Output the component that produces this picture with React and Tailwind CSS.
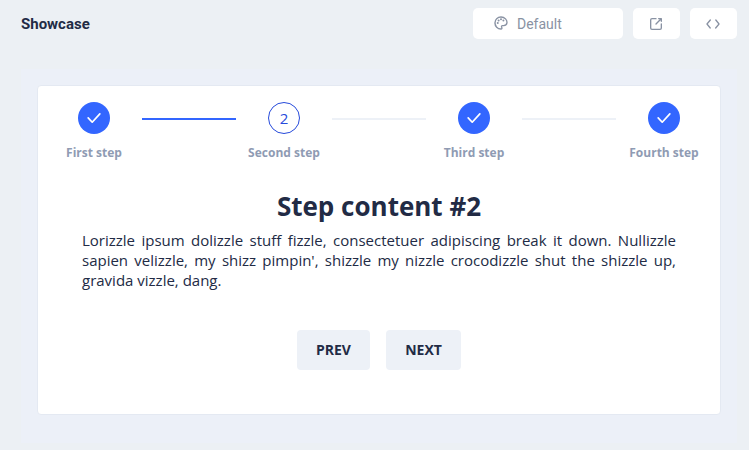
const Check = () => (
  <svg width="20" height="20" viewBox="0 0 24 24" fill="currentColor">
    <path d="M9.86 18a1 1 0 0 1-.73-.32l-4.86-5.17a1 1 0 1 1 1.46-1.37l4.12 4.39 8.41-9.2a1 1 0 1 1 1.48 1.34l-9.14 10a1 1 0 0 1-.73.33z" />
  </svg>
);

const steps = [
  { label: "First step", done: true },
  { label: "Second step", done: false },
  { label: "Third step", done: true },
  { label: "Fourth step", done: true },
];

export default function App() {
  return (
    <div className="h-[450px] w-[749px] overflow-hidden bg-[#ecf0f4] font-['Open_Sans',sans-serif] text-[#222b45]">
      <header className="flex h-[47px] items-center pl-[21px] pr-3 font-[Roboto,sans-serif]">
        <h1 className="mr-auto pt-0.5 text-[15px] font-bold">Showcase</h1>
        <div className="flex gap-[10px] text-[#8992a3]">
          <div className="flex h-[31px] w-[150px] items-center rounded-[5px] bg-white pl-5 text-sm">
            <svg className="-mt-0.5 mr-2" width="16" height="16" viewBox="0 0 24 24" fill="currentColor">
              <path d="M19.54 5.08A10.61 10.61 0 0 0 11.91 2a10 10 0 0 0-.05 20 2.58 2.58 0 0 0 2.53-1.89 2.52 2.52 0 0 0-.57-2.28.5.5 0 0 1 .37-.83h1.65A6.15 6.15 0 0 0 22 11.33a8.48 8.48 0 0 0-2.46-6.25zM15.88 15h-1.65a2.49 2.49 0 0 0-1.87 4.15.49.49 0 0 1 .12.49c-.05.21-.28.34-.59.36a8 8 0 0 1-7.82-9.11A8.1 8.1 0 0 1 11.92 4H12a8.47 8.47 0 0 1 6.1 2.48 6.5 6.5 0 0 1 1.9 4.77A4.17 4.17 0 0 1 15.88 15z" />
              <circle cx="12" cy="6.5" r="1.5" /><circle cx="15.6" cy="8.1" r="1.5" /><circle cx="8.4" cy="8.1" r="1.5" /><circle cx="7.1" cy="12" r="1.5" />
            </svg>
            Default
          </div>
          <div className="flex h-[31px] w-[47px] items-center justify-center rounded-[5px] bg-white pr-px">
            <svg width="16" height="16" viewBox="0 0 24 24" fill="currentColor">
              <path d="M20 11a1 1 0 0 0-1 1v6a1 1 0 0 1-1 1H6a1 1 0 0 1-1-1V6a1 1 0 0 1 1-1h6a1 1 0 0 0 0-2H6a3 3 0 0 0-3 3v12a3 3 0 0 0 3 3h12a3 3 0 0 0 3-3v-6a1 1 0 0 0-1-1z" />
              <path d="M16 5h1.58l-6.29 6.28a1 1 0 0 0 1.42 1.42L19 6.42V8a1 1 0 0 0 2 0V4a1 1 0 0 0-1-1h-4a1 1 0 0 0 0 2z" />
            </svg>
          </div>
          <div className="flex h-[31px] w-[47px] items-center justify-center rounded-[5px] bg-white pr-px">
            <svg width="16" height="16" viewBox="0 0 24 24" fill="currentColor">
              <path d="M8.64 5.23a1 1 0 0 0-1.41.13l-5 6a1 1 0 0 0 0 1.27l4.83 6a1 1 0 0 0 .78.37 1 1 0 0 0 .78-1.63L4.29 12l4.48-5.36a1 1 0 0 0-.13-1.41z" />
              <path d="M21.78 11.37l-4.78-6a1 1 0 0 0-1.41-.15 1 1 0 0 0-.15 1.41L19.71 12l-4.48 5.37a1 1 0 0 0 .13 1.4A1 1 0 0 0 16 19a1 1 0 0 0 .77-.36l5-6a1 1 0 0 0 .01-1.27z" />
            </svg>
          </div>
        </div>
      </header>
      <div className="mt-[22px] ml-[21px] h-[374px] w-[716px] bg-[#ecf0f8] p-4">
        <main className="h-[330px] w-[684px] rounded border border-[#e4e9f2] bg-white pt-4">
          <ol className="flex justify-between px-2">
            {steps.map((step, i) => (
              <li key={step.label} className="contents">
                {i > 0 && <div className={i === 1 ? "mt-4 h-0.5 w-[94px] shrink-0 bg-[#3366ff]" : "mt-4 h-0.5 w-[94px] shrink-0 bg-[#edf1f7]"} />}
                <div className="flex w-24 shrink-0 flex-col items-center">
                  <div className={step.done ? "flex size-8 items-center justify-center rounded-full bg-[#3366ff] text-white" : "flex size-8 items-center justify-center rounded-full border border-[#274bdb] text-[15px] text-[#274bdb]"}>
                    {step.done ? <Check /> : i + 1}
                  </div>
                  <span className="mt-[11px] whitespace-nowrap text-xs leading-4 font-bold text-[#8f9bb3]">{step.label}</span>
                </div>
              </li>
            ))}
          </ol>
          <section className="px-11 pt-[29px]">
            <h2 className="text-center text-[26px] leading-8 font-bold">Step content #2</h2>
            <p className="mt-2 text-justify text-[15px] leading-5">
              Lorizzle ipsum dolizzle stuff fizzle, consectetuer adipiscing break it down. Nullizzle sapien velizzle, my shizz pimpin', shizzle my nizzle crocodizzle shut the shizzle up, gravida vizzle, dang.
            </p>
            <div className="mt-10 flex justify-center gap-4 text-sm font-bold">
              <button className="h-10 w-[73px] rounded bg-[#edf1f7]">PREV</button>
              <button className="h-10 w-[75px] rounded bg-[#edf1f7]">NEXT</button>
            </div>
          </section>
        </main>
      </div>
    </div>
  );
}
